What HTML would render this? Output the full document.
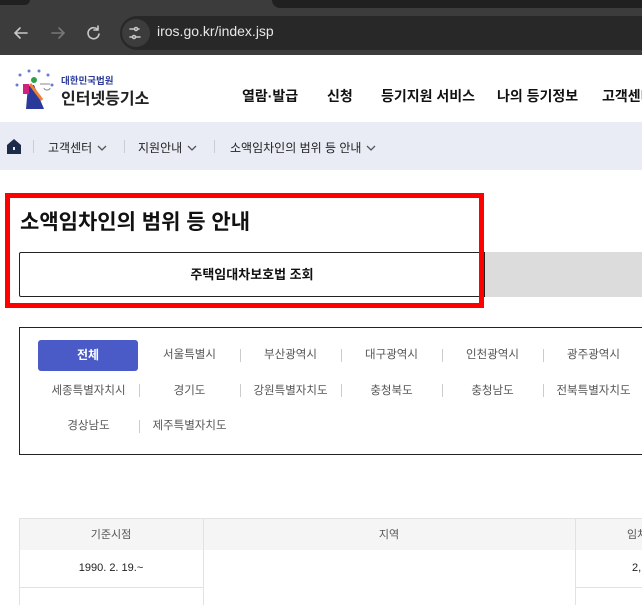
<!DOCTYPE html>
<html><head><meta charset="utf-8"><style>
*{margin:0;padding:0;box-sizing:border-box}
body{width:642px;height:605px;overflow:hidden;background:#fff;font-family:"Liberation Sans","Noto Sans CJK KR",sans-serif;position:relative}
.a{position:absolute;white-space:nowrap}
.chrome{left:0;top:0;width:642px;height:55px;background:#3c3c3c}
.omni{left:120px;top:16px;width:540px;height:34px;background:#282828;border-radius:17px}
.nav{font-size:14px;font-weight:bold;color:#111;top:86px}
.crumb{left:0;top:122px;width:642px;height:48px;background:#e9ecf4}
.cb{font-size:12px;color:#222;top:139px}
.sep{width:1px;background:#c8ccd6}
.reg{font-size:11.5px;color:#555;width:101px;text-align:center;line-height:16px}
.vs{width:1px;height:13px;background:#ccc}
.th{background:#f5f5f5}
.chev{display:inline-block;vertical-align:middle;margin-left:5px;margin-top:-2px}
</style></head><body>
<div class="a chrome"></div>
<div class="a" style="left:0;top:0;width:30px;height:5px;background:#202020;border-radius:0 0 10px 0"></div>
<div class="a" style="left:272px;top:0;width:380px;height:8px;background:#202020;border-radius:0 0 0 10px"></div>
<div class="a omni"></div>
<div class="a" style="left:122px;top:19px;width:28px;height:28px;border-radius:14px;background:#3c3c3c"></div>
<svg class="a" style="left:0;top:16px" width="160" height="34" viewBox="0 0 160 34">
<g stroke="#c8c8c8" stroke-width="1.6" fill="none" stroke-linecap="round">
<path d="M27 17H15M20 12l-5 5 5 5"/>
<path d="M52 17h12M59 12l5 5-5 5" stroke="#777"/>
<path d="M98 14a5.5 5.5 0 1 0 1 4M98 10v4h-4"/>
<path d="M130 13h4M138 13h1M130 21h2M136 21h4"/><circle cx="136" cy="13" r="1.5"/><circle cx="134" cy="21" r="1.5"/>
</g></svg>
<div class="a" style="left:157px;top:23px;font-size:14px;color:#e8e8e8">iros.go.kr/index.jsp</div>

<svg class="a" style="left:12px;top:66px" width="50" height="44" viewBox="0 0 50 44">
<g fill="#6a7ad0"><circle cx="8" cy="9" r="1.5"/><circle cx="17" cy="5" r="1.5"/><circle cx="27" cy="5" r="1.5"/><circle cx="36" cy="9" r="1.5"/><circle cx="5" cy="19" r="1.5"/><circle cx="40" cy="19" r="1.5"/></g>
<path d="M16 20l6-1 10 24H14z" fill="#2a3a9a"/>
<rect x="11" y="18" width="6" height="10" fill="#d02080"/>
<path d="M18 18l12 16" stroke="#f08030" stroke-width="3"/>
<circle cx="22" cy="14" r="3" fill="#30a050"/>
<path d="M28 18h10M32 22a3 2 0 0 0 6 0" stroke="#888" fill="none"/>
</svg>
<div class="a" style="left:61px;top:73px;font-size:9.5px;font-weight:bold;color:#2a3a9a">대한민국법원</div>
<div class="a" style="left:61px;top:85px;font-size:16px;font-weight:bold;color:#222">인터넷등기소</div>
<div class="a nav" style="left:242px">열람·발급</div>
<div class="a nav" style="left:327px">신청</div>
<div class="a nav" style="left:381px">등기지원 서비스</div>
<div class="a nav" style="left:497px">나의 등기정보</div>
<div class="a nav" style="left:602px">고객센터</div>

<div class="a crumb"></div>
<svg class="a" style="left:7px;top:139px" width="14" height="15" viewBox="0 0 14 15"><path d="M0 6L7 0l7 6v9H0z" fill="#1e2a4a"/><rect x="6" y="8" width="2" height="3" fill="#e9ecf4"/></svg>
<div class="a sep" style="left:33px;top:140px;height:13px"></div>
<div class="a cb" style="left:48px">고객센터<svg class="chev" width="10" height="6" viewBox="0 0 10 6"><path d="M1 1l4 4 4-4" stroke="#555" stroke-width="1.3" fill="none"/></svg></div>
<div class="a sep" style="left:124px;top:140px;height:13px"></div>
<div class="a cb" style="left:138px">지원안내<svg class="chev" width="10" height="6" viewBox="0 0 10 6"><path d="M1 1l4 4 4-4" stroke="#555" stroke-width="1.3" fill="none"/></svg></div>
<div class="a sep" style="left:214px;top:140px;height:13px"></div>
<div class="a cb" style="left:230px">소액임차인의 범위 등 안내<svg class="chev" width="10" height="6" viewBox="0 0 10 6"><path d="M1 1l4 4 4-4" stroke="#555" stroke-width="1.3" fill="none"/></svg></div>

<div class="a" style="left:20px;top:206px;font-size:21px;font-weight:bold;color:#111">소액임차인의 범위 등 안내</div>
<div class="a" style="left:484px;top:252px;width:158px;height:45px;background:#dcdcdc"></div>
<div class="a" style="left:19px;top:252px;width:466px;height:45px;border:1px solid #222;border-radius:2px 0 0 2px;text-align:center;line-height:43px;font-size:13px;font-weight:bold;color:#111">주택임대차보호법 조회</div>
<div class="a" style="left:5px;top:193px;width:479px;height:115px;border:5px solid #f00"></div>

<div class="a" style="left:19px;top:327px;width:640px;height:128px;border:1px solid #222"></div>
<div class="a" style="left:38px;top:340px;width:100px;height:31px;background:#4a5bc8;border-radius:3px;color:#fff;font-size:12px;font-weight:bold;text-align:center;line-height:31px">전체</div>
<div class="a reg" style="left:139px;top:347px">서울특별시</div>
<div class="a reg" style="left:240px;top:347px">부산광역시</div>
<div class="a reg" style="left:341px;top:347px">대구광역시</div>
<div class="a reg" style="left:442px;top:347px">인천광역시</div>
<div class="a reg" style="left:543px;top:347px">광주광역시</div>
<div class="a vs" style="left:240px;top:349px"></div><div class="a vs" style="left:341px;top:349px"></div><div class="a vs" style="left:442px;top:349px"></div><div class="a vs" style="left:543px;top:349px"></div>
<div class="a reg" style="left:38px;top:383px">세종특별자치시</div>
<div class="a reg" style="left:139px;top:383px">경기도</div>
<div class="a reg" style="left:240px;top:383px">강원특별자치도</div>
<div class="a reg" style="left:341px;top:383px">충청북도</div>
<div class="a reg" style="left:442px;top:383px">충청남도</div>
<div class="a reg" style="left:543px;top:383px">전북특별자치도</div>
<div class="a vs" style="left:139px;top:384px"></div><div class="a vs" style="left:240px;top:384px"></div><div class="a vs" style="left:341px;top:384px"></div><div class="a vs" style="left:442px;top:384px"></div><div class="a vs" style="left:543px;top:384px"></div>
<div class="a reg" style="left:38px;top:418px">경상남도</div>
<div class="a reg" style="left:139px;top:418px">제주특별자치도</div>
<div class="a vs" style="left:139px;top:420px"></div>

<div class="a th" style="left:19px;top:518px;width:623px;height:32px;border-top:1px solid #e2e2e2"></div>
<div class="a" style="left:19px;top:518px;width:1px;height:87px;background:#e2e2e2"></div>
<div class="a" style="left:203px;top:518px;width:1px;height:87px;background:#e2e2e2"></div>
<div class="a" style="left:575px;top:518px;width:1px;height:87px;background:#e2e2e2"></div>
<div class="a" style="left:19px;top:587px;width:184px;height:1px;background:#e2e2e2"></div>
<div class="a" style="left:575px;top:587px;width:67px;height:1px;background:#e2e2e2"></div>
<div class="a" style="left:19px;top:526px;width:184px;text-align:center;font-size:11px;color:#555">기준시점</div>
<div class="a" style="left:203px;top:526px;width:372px;text-align:center;font-size:11px;color:#555">지역</div>
<div class="a" style="left:627px;top:526px;font-size:11px;color:#555">임차</div>
<div class="a" style="left:19px;top:562px;width:184px;text-align:center;font-size:11px;color:#222">1990. 2. 19.~</div>
<div class="a" style="left:632px;top:562px;font-size:11px;color:#222">2,</div>
</body></html>
